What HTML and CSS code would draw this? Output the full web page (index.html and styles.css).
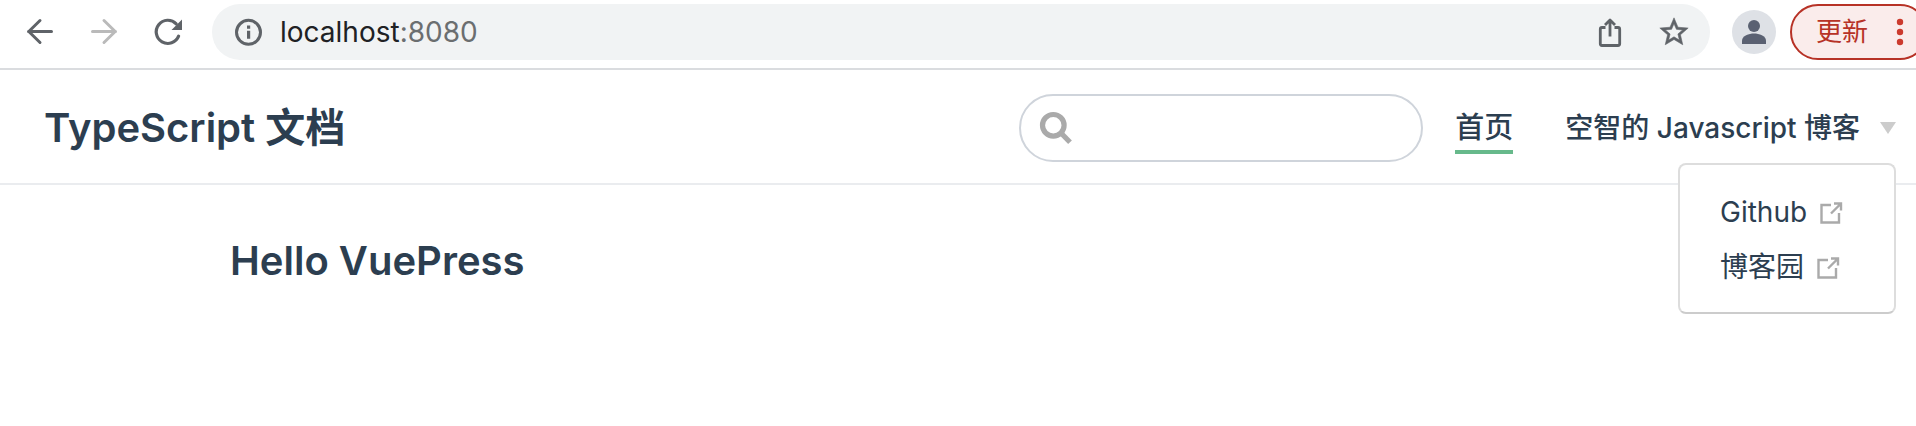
FILE: index.html
```html
<!DOCTYPE html>
<html lang="zh-CN">
<head>
<meta charset="utf-8">
<meta name="viewport" content="width=device-width, initial-scale=1">
<title>TypeScript 文档</title>
<link rel="stylesheet" href="styles.css">
</head>
<body>
<div class="toolbar">
  <div class="history">
    <button class="icon-button" type="button" aria-label="后退">
      <svg width="32" height="32" viewBox="0 0 32 32" fill="none" stroke="#5f6368" stroke-width="3" stroke-linecap="round" stroke-linejoin="round"><path d="M27.5 15.5H4.5M16 4.5 4.8 15.5 16 26.500"/></svg>
    </button>
    <button class="icon-button" type="button" aria-label="前进" disabled>
      <svg width="32" height="32" viewBox="0 0 32 32" fill="none" stroke="#bababa" stroke-width="3" stroke-linecap="round" stroke-linejoin="round"><path d="M4.500 15.500H27.500M16 4.500 27.200 15.500 16 26.500"/></svg>
    </button>
    <button class="icon-button" type="button" aria-label="重新加载">
      <svg width="32" height="32" viewBox="0 0 32 32" fill="none"><path d="M26.600 20.200A11.600 11.600 0 1 1 24.200 7.800" stroke="#5f6368" stroke-width="3.200" stroke-linecap="round"/><path d="M30 3.500V14H19.500Z" fill="#5f6368"/></svg>
    </button>
  </div>
  <div class="address">
    <svg class="info" width="28" height="28" viewBox="0 0 28 28" fill="none"><circle cx="14.500" cy="14.300" r="12" stroke="#5f6368" stroke-width="3"/><path d="M13 12.800h3.200v8H13zM13 7.500h3.200v3.200H13z" fill="#5f6368"/></svg>
    <span class="url">localhost<span class="port">:8080</span></span>
    <button class="icon-button share" type="button" aria-label="分享">
      <svg width="32" height="32" viewBox="0 0 32 32" fill="none" stroke="#5f6368" stroke-width="2.800" stroke-linejoin="round"><path d="M11.500 11.500H8Q6.300 11.500 6.300 13.200V27.800Q6.300 29.500 8 29.500H24Q25.700 29.500 25.700 27.800V13.200Q25.700 11.500 24 11.500H20.500M16 20.500V4.500M11 9 16 4l5 5"/></svg>
    </button>
    <button class="icon-button" type="button" aria-label="收藏">
      <svg width="34" height="34" viewBox="0 0 24 24" fill="#5f6368" stroke="#5f6368" stroke-width=".4"><path d="M22 9.240l-7.190-.62L12 2 9.190 8.630 2 9.240l5.460 4.730L5.820 21 12 17.270 18.180 21l-1.630-7.030L22 9.240zM12 15.400l-3.760 2.270 1-4.280-3.320-2.880 4.380-.38L12 6.100l1.710 4.040 4.380.38-3.320 2.880 1 4.280L12 15.400z"/></svg>
    </button>
  </div>
  <button class="avatar" type="button" aria-label="用户">
    <svg width="44" height="44" viewBox="0 0 44 44" fill="#5a6172"><circle cx="22" cy="16" r="6"/><path d="M10 34V30.500C10 26 17 23.500 22 23.500S34 26 34 30.500V34Z"/></svg>
  </button>
  <button class="update" type="button">更新
    <svg width="8" height="28" viewBox="0 0 8 28" fill="#cc3b2e"><circle cx="4" cy="4" r="3.200"/><circle cx="4" cy="14" r="3.200"/><circle cx="4" cy="24" r="3.200"/></svg>
  </button>
</div>
<header class="navbar">
  <a class="site-name" href="#">TypeScript 文档</a>
  <label class="search">
    <svg width="34" height="34" viewBox="0 0 34 34" fill="none" stroke="#aaa" stroke-width="5.200"><circle cx="14.300" cy="14.300" r="10.800"/><path d="M21.500 21.500 31 31.200"/></svg>
    <input type="search" aria-label="搜索">
  </label>
  <nav class="links">
    <a class="link active" href="#">首页</a>
    <div class="dropdown">
      <button class="link dropdown-title" type="button" aria-expanded="true">空智的 Javascript 博客<span class="arrow"></span></button>
      <ul class="menu">
        <li><a href="#">Github <svg width="24" height="24" viewBox="0 0 24 24" fill="none" stroke="#aaa" stroke-width="2.400"><path d="M12 4H2.500V21.500H20V12M12 12.500 21.500 3M15 2.500H22V9.500"/></svg></a></li>
        <li><a href="#">博客园 <svg width="24" height="24" viewBox="0 0 24 24" fill="none" stroke="#aaa" stroke-width="2.400"><path d="M12 4H2.500V21.500H20V12M12 12.500 21.500 3M15 2.500H22V9.500"/></svg></a></li>
      </ul>
    </div>
  </nav>
</header>
<main class="page">
  <h1>Hello VuePress</h1>
</main>
</body>
</html>
```

FILE: styles.css
```css
* {
  box-sizing: border-box;
}

body {
  margin: 0;
  overflow-x: hidden;
  background: #fff;
  color: #2c3e50;
  font-family: Inter, "Noto Sans CJK SC", sans-serif;
}

button {
  padding: 0;
  border: 0;
  background: none;
  font-family: inherit;
}

a {
  color: inherit;
  text-decoration: none;
}

svg {
  display: block;
  flex: none;
}

.toolbar {
  display: flex;
  align-items: center;
  padding: 4px 0 8px 24px;
  border-bottom: 2px solid #dadcdf;
  overflow: hidden;
}

.history {
  display: flex;
  gap: 32px;
  margin-right: 28px;
}

.address {
  flex: 1;
  display: flex;
  align-items: center;
  height: 56px;
  padding: 0 19px 0 22px;
  border-radius: 28px;
  background: #f1f3f4;
}

.url {
  flex: 1;
  margin-left: 18px;
  color: #202124;
  font-size: 28px;
  line-height: 36px;
}

.port {
  color: #6b6e70;
}

.share {
  margin-right: 31px;
}

.avatar {
  margin: 0 14px 0 22px;
  border-radius: 50%;
  background: #dee1e6;
}

.update {
  display: flex;
  align-items: center;
  gap: 28px;
  height: 56px;
  margin-right: -12px;
  padding: 0 22px 0 24px;
  border: 2px solid #b73226;
  border-radius: 28px;
  background: #faeceb;
  color: #b73226;
  font-size: 26px;
  line-height: 36px;
}

.navbar {
  display: flex;
  align-items: center;
  padding: 24px 20px 21px 44px;
  border-bottom: 2px solid #eaecef;
}

.site-name {
  margin-right: auto;
  font-size: 40px;
  font-weight: 600;
  line-height: 56px;
}

.search {
  display: flex;
  align-items: center;
  width: 404px;
  height: 68px;
  padding: 0 20px 0 18px;
  border: 2px solid #cfd4db;
  border-radius: 34px;
}

.search input {
  flex: 1;
  min-width: 0;
  margin-left: 10px;
  border: 0;
  outline: 0;
  background: none;
  font-size: 28px;
}

.links {
  display: flex;
  gap: 52px;
  margin-left: 32px;
}

.link {
  display: flex;
  align-items: center;
  margin-top: 4px;
  padding: 0;
  border-bottom: 4px solid transparent;
  color: #2c3e50;
  font-size: 28px;
  font-weight: 500;
  line-height: 44px;
}

.active {
  border-color: #67b98b;
  font-size: 29px;
}

.dropdown {
  position: relative;
}

.arrow {
  margin-left: 20px;
  border: 8px solid transparent;
  border-top: 12px solid #ccc;
  border-bottom: 0;
}

.menu {
  position: absolute;
  top: 61px;
  right: 0;
  width: 218px;
  margin: 0;
  padding: 20px 40px 17px;
  border: 2px solid #ddd;
  border-bottom-color: #ccc;
  border-radius: 8px;
  background: #fff;
  list-style: none;
}

.menu a {
  display: flex;
  align-items: center;
  gap: 12px;
  font-size: 28px;
  line-height: 55px;
}

.page {
  padding: 48px 230px;
}

h1 {
  margin: 0;
  font-size: 40px;
  font-weight: 600;
  line-height: 56px;
}
```
